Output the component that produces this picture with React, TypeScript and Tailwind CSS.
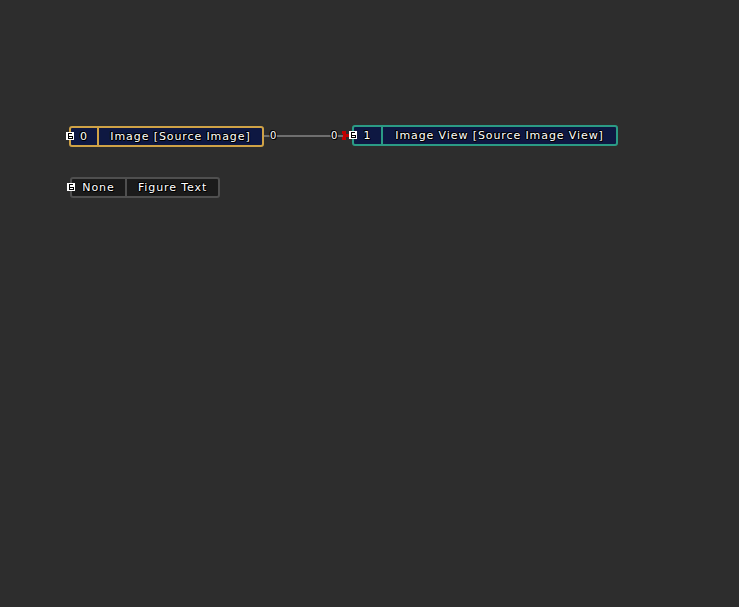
import React from 'react';

type NodeProps = {
  left: number;
  top: number;
  index: string;
  label: string;
  idxWidth: number;
  width: number;
  border: string;
  fill: string;
};

const outline =
  '[text-shadow:1px_0_0_#000,-1px_0_0_#000,0_1px_0_#000,0_-1px_0_#000,1px_1px_0_#000,-1px_-1px_0_#000]';

function PortIcon() {
  return (
    <svg width="8" height="8" viewBox="0 0 8 8" className="block" shapeRendering="crispEdges">
      <rect x="0" y="0" width="8" height="8" fill="#fff" />
      <path d="M2 1h4v1H3v2h4v3H2z M3 5v1h3V5z" fill="#000" fillRule="evenodd" />
    </svg>
  );
}

function GraphNode({ left, top, index, label, idxWidth, width, border, fill }: NodeProps) {
  return (
    <div
      className="absolute flex h-[21px] rounded-[3px] border-2"
      style={{ left, top, width, borderColor: border, background: fill }}
    >
      <div
        className={`flex items-center justify-center border-r-2 text-[11px] leading-none tracking-[0.9px] text-white ${outline}`}
        style={{ width: idxWidth, borderColor: border }}
      >
        {index}
      </div>
      <div
        className={`flex flex-1 items-center justify-center text-[11px] leading-none tracking-[0.9px] text-white ${outline}`}
      >
        {label}
      </div>
      <div className="absolute left-[-5px] top-[4px]">
        <PortIcon />
      </div>
    </div>
  );
}

export default function App() {
  return (
    <div className="relative h-[607px] w-[739px] overflow-hidden bg-[#2d2d2d] font-['DejaVu_Sans',sans-serif]">
      {/* connection between output 0 and input 0 */}
      <svg className="absolute left-0 top-0" width="739" height="607" shapeRendering="crispEdges">
        <rect x="264" y="135" width="80" height="2" fill="#6f6f6f" />
        <path d="M342 131h4v3h-4z M343 134h7v3h-7z M342 137h4v3h-4z" fill="#c00000" />
      </svg>
      <span className={`absolute left-[270px] top-[131px] text-[10px] leading-none text-white ${outline}`}>0</span>
      <span className={`absolute left-[331px] top-[131px] text-[10px] leading-none text-white ${outline}`}>0</span>

      <GraphNode
        left={69}
        top={126}
        index="0"
        label="Image [Source Image]"
        idxWidth={28}
        width={195}
        border="#cfa246"
        fill="#0e1842"
      />
      <GraphNode
        left={352}
        top={125}
        index="1"
        label="Image View [Source Image View]"
        idxWidth={29}
        width={266}
        border="#2b9b85"
        fill="#0e1842"
      />
      <GraphNode
        left={70}
        top={177}
        index="None"
        label="Figure Text"
        idxWidth={55}
        width={150}
        border="#4f4f4f"
        fill="#1b1b1b"
      />
    </div>
  );
}
